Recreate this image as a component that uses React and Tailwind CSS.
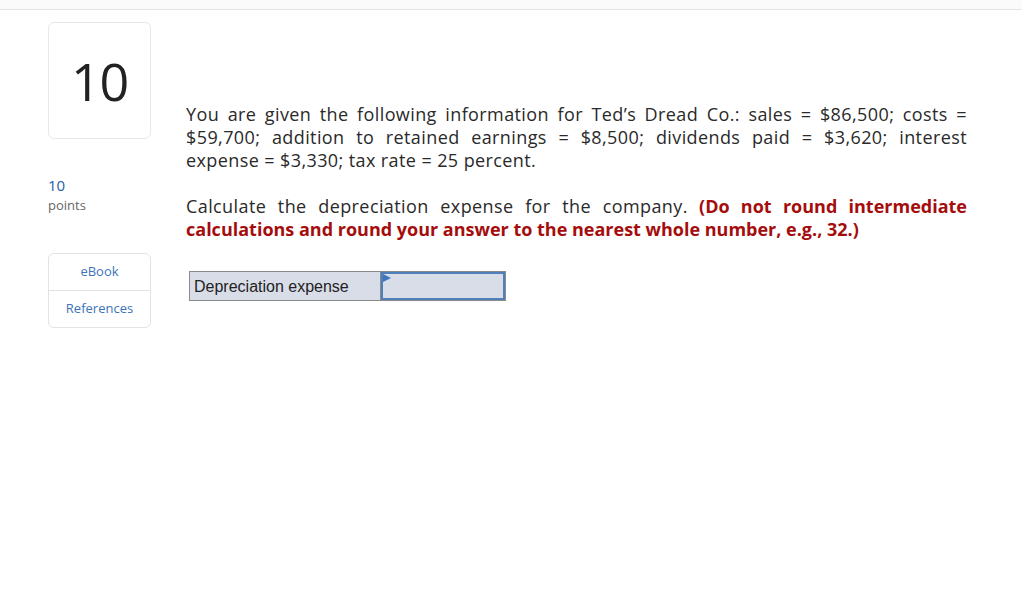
import React from 'react';

const body = { fontFamily: '"Open Sans", Lato, sans-serif' };

// each line is justified on its own so the breaks fall where the original's do
const Line = ({ children, last }) => (
  <span className={last ? 'block' : 'block text-justify [text-align-last:justify]'}>{children}</span>
);

const App = () => {
  return (
    <div className="min-h-[612px] w-[1022px] bg-white" style={body}>
      {/* top strip */}
      <div className="h-[10px] bg-[#fbfbfb] border-b border-[#e6e6e6]" />

      <div className="flex pl-[48px] pt-[12px]">
        {/* left column */}
        <div className="w-[103px] shrink-0">
          <div className="h-[117px] rounded-md border border-[#e8e8e8] flex items-center justify-center">
            <span className="text-[52px] leading-none text-[#222] tracking-tight">10</span>
          </div>
          <div className="mt-[36px] text-[15px] leading-[20px] text-[#1d5fa8]">10</div>
          <div className="text-[13px] leading-[20px] text-[#666]">points</div>

          <div className="mt-[38px] rounded-md border border-[#e3e3e3] text-[13px] text-[#3b74b8]">
            <div className="h-[37px] flex items-center justify-center border-b border-[#e3e3e3]">eBook</div>
            <div className="h-[36px] flex items-center justify-center">References</div>
          </div>
        </div>

        {/* main */}
        <div className="ml-[35px] w-[781px] pt-[81px] text-[18px] leading-[23px] text-[#2a2a2a]">
          <p className="tracking-[0.4px]">
            <Line>You are given the following information for Ted’s Dread Co.: sales = $86,500; costs =</Line>
            <Line>$59,700; addition to retained earnings = $8,500; dividends paid = $3,620; interest</Line>
            <Line last>expense = $3,330; tax rate = 25 percent.</Line>
          </p>
          <p className="mt-[23px]">
            <Line>
              <span className="tracking-[0.4px]">Calculate the depreciation expense for the company.</span>{' '}
              <strong className="font-bold text-[#a50d0d]">(Do not round intermediate</strong>
            </Line>
            <Line last>
              <strong className="font-bold text-[#a50d0d]">
                calculations and round your answer to the nearest whole number, e.g., 32.)
              </strong>
            </Line>
          </p>

          <div className="mt-[30px] ml-[3px] flex w-[317px] h-[30px] border border-[#8a8a8a] bg-[#d9dde8]"
            style={{ fontFamily: '"Liberation Sans", Arial, sans-serif' }}>
            <div className="w-[191px] border-r border-[#8a8a8a] flex items-center pl-[4px] text-[16px] text-[#222]">
              Depreciation expense
            </div>
            <div className="relative flex-1 border-2 border-[#4f80bd] bg-[#d9dde8]">
              <svg className="absolute left-0 top-0" width="8" height="8" viewBox="0 0 8 8">
                <polygon points="0,0 8,4 0,8" fill="#3f76c0" />
              </svg>
            </div>
          </div>
        </div>
      </div>
    </div>
  );
};

export default App;
